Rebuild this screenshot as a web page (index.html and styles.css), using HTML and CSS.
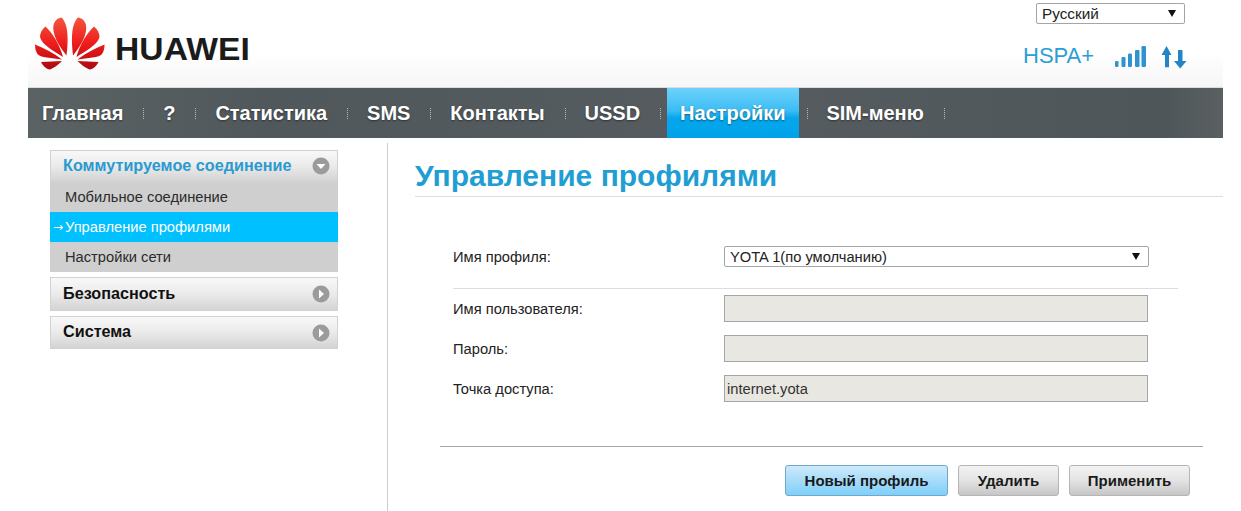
FILE: index.html
```html
<!DOCTYPE html>
<html lang="ru">
<head>
  <meta charset="UTF-8">
  <title>Управление профилями</title>
  <link rel="stylesheet" href="styles.css">
</head>
<body>
  <div class="page">

    <div class="header">
      <div class="logo">
        <svg class="logo-mark" width="80" height="80" viewBox="0 0 80 80">
          <defs>
            <linearGradient id="petal" gradientUnits="userSpaceOnUse" x1="0" y1="7" x2="0" y2="60">
              <stop offset="0" stop-color="#f4583e"/>
              <stop offset="0.5" stop-color="#ee1c1c"/>
              <stop offset="1" stop-color="#a80a10"/>
            </linearGradient>
            <g id="petals" fill="url(#petal)">
              <path d="M36.500 45.500C28 35 22 24 23.500 15C25 10 28 8 31.500 7.500C37 13 39 24 36.500 45.500Z"/>
              <path d="M33 47C24 41 12 35 10 27C10 23 12 19 15.500 16.500C22 22 30 35 33 47Z"/>
              <path d="M32 49.500C22 48 10 47.500 7.500 44C5.500 41 5 38 5 34.500C14 38 24 43 32 49.500Z"/>
              <path d="M11 52L32 51C28 55 24 58 20 59.500C16 59 13 56 11 52Z"/>
            </g>
          </defs>
          <use href="#petals"/>
          <use href="#petals" transform="translate(79.500 0) scale(-1 1)"/>
        </svg>
        <span class="logo-text">HUAWEI</span>
      </div>
      <div class="header-right">
        <div class="select lang">
          <select><option>Русский</option></select>
        </div>
        <div class="status">
          <span class="network">HSPA+</span>
          <svg class="signal" width="32" height="22" viewBox="0 0 32 22" fill="#2f93cf">
            <rect x="0" y="15" width="3.500" height="6" rx="1.200"/>
            <rect x="6.500" y="11" width="4" height="10" rx="1.200"/>
            <rect x="13" y="7.500" width="4" height="13.500" rx="1.200"/>
            <rect x="20" y="4" width="4.500" height="17" rx="1.200"/>
            <rect x="26.500" y="0" width="4.500" height="21" rx="1.200"/>
          </svg>
          <svg class="updown" width="26" height="23" viewBox="0 0 26 23" fill="#2385c4">
            <path d="M5.500 0L10.500 9H8V21.300H4V9H0.500Z"/>
            <path d="M17 4H21.500V15H25.500L19.200 22.500L13 15H17Z"/>
          </svg>
        </div>
      </div>
    </div>

    <ul class="nav">
      <li><a>Главная</a></li>
      <li class="sep"></li>
      <li><a>?</a></li>
      <li class="sep"></li>
      <li><a>Статистика</a></li>
      <li class="sep"></li>
      <li><a>SMS</a></li>
      <li class="sep"></li>
      <li><a>Контакты</a></li>
      <li class="sep"></li>
      <li><a>USSD</a></li>
      <li class="sep"></li>
      <li class="active"><a>Настройки</a></li>
      <li class="sep"></li>
      <li><a>SIM-меню</a></li>
      <li class="sep"></li>
    </ul>

    <div class="content">
      <div class="sidebar">
        <div class="side-head open">
          <span>Коммутируемое соединение</span>
          <svg width="18" height="18" viewBox="0 0 18 18"><circle cx="9" cy="9" r="8.500" fill="#9b9b9b"/><path d="M4.500 7H13.500L9 12Z" fill="#fff"/></svg>
        </div>
        <ul class="side-sub">
          <li>Мобильное соединение</li>
          <li class="current">Управление профилями</li>
          <li>Настройки сети</li>
        </ul>
        <div class="side-head">
          <span>Безопасность</span>
          <svg width="18" height="18" viewBox="0 0 18 18"><circle cx="9" cy="9" r="8.500" fill="#9b9b9b"/><path d="M7 4.500V13.500L12 9Z" fill="#fff"/></svg>
        </div>
        <div class="side-head">
          <span>Система</span>
          <svg width="18" height="18" viewBox="0 0 18 18"><circle cx="9" cy="9" r="8.500" fill="#9b9b9b"/><path d="M7 4.500V13.500L12 9Z" fill="#fff"/></svg>
        </div>
      </div>

      <div class="main">
        <h1>Управление профилями</h1>

        <div class="form">
          <div class="row row-select">
            <label>Имя профиля:</label>
            <div class="select profile">
              <select><option>YOTA 1(по умолчанию)</option></select>
            </div>
          </div>
          <div class="divider"></div>
          <div class="row">
            <label>Имя пользователя:</label>
            <input type="text" disabled>
          </div>
          <div class="row">
            <label>Пароль:</label>
            <input type="text" disabled>
          </div>
          <div class="row">
            <label>Точка доступа:</label>
            <input type="text" value="internet.yota" disabled>
          </div>
        </div>

        <div class="actions">
          <button class="primary">Новый профиль</button>
          <button class="del">Удалить</button>
          <button class="apply">Применить</button>
        </div>
      </div>
    </div>

  </div>
</body>
</html>
```

FILE: styles.css
```css
* {
  box-sizing: border-box;
}

html, body {
  margin: 0;
  padding: 0;
  background: #fff;
}

body {
  font-family: "Liberation Sans", Arial, sans-serif;
  color: #222;
  overflow: hidden;
}

.page {
  width: 1195px;
  height: 511px;
  margin-left: 28px;
}

/* header */
.header {
  height: 88px;
  display: flex;
  justify-content: space-between;
  background: linear-gradient(to bottom, #fff 0%, #fff 60%, #f6f6f6 100%);
  border-bottom: 1px solid #ddd;
}

.logo {
  display: flex;
  align-items: flex-start;
  padding-left: 2px;
  padding-top: 10px;
}

.logo-text {
  margin-left: 5px;
  margin-top: 21px;
  font-size: 32px;
  line-height: 36px;
  font-weight: bold;
  color: #1b1b1b;
  letter-spacing: 0.1px;
  transform: scaleX(1.05);
  transform-origin: left center;
}

.header-right {
  width: 200px;
  padding-top: 3px;
  padding-left: 5px;
}

.select {
  position: relative;
}

.select select {
  width: 100%;
  height: 100%;
  appearance: none;
  background: #fff;
  border: 1px solid #a5a5a5;
  border-radius: 2px;
  font-family: "Liberation Sans", Arial, sans-serif;
  font-size: 14.700px;
  color: #222;
  padding: 0 5px;
  outline: none;
}

.select::after {
  content: "";
  position: absolute;
  top: 7px;
  right: 9px;
  border-left: 4px solid transparent;
  border-right: 4px solid transparent;
  border-top: 7px solid #111;
}

.lang {
  width: 149px;
  height: 21px;
  margin-left: 8px;
}

.lang select {
  font-size: 15.300px;
}

.status {
  display: flex;
  align-items: flex-start;
  margin-top: 17px;
  margin-left: -5px;
}

.network {
  font-size: 22px;
  line-height: 30px;
  color: #2c9ed4;
  width: 92px;
}

.signal {
  margin-top: 5px;
}

.updown {
  margin-top: 5px;
  margin-left: 14px;
}

/* nav */
.nav {
  list-style: none;
  margin: 0;
  padding: 0;
  height: 50px;
  display: flex;
  align-items: center;
  background: linear-gradient(to right, #5b6264 0%, #50585b 20%, #565c5f 60%, #4e5659 95%, #5a6062 100%);
}

.nav li a {
  display: block;
  padding: 0 20px 0 14px;
  font-size: 20px;
  line-height: 50px;
  font-weight: bold;
  color: #fff;
  text-shadow: 0 1px 2px rgba(0, 0, 0, 0.45);
}

.nav .sep + li a {
  padding-left: 20px;
}

.nav .sep {
  width: 1px;
  height: 11px;
  margin-right: -1.100px;
  border-left: 1px dotted #b5babb;
}

.nav .active {
  align-self: stretch;
  margin-left: 7px;
  margin-right: 8px;
  background: linear-gradient(to bottom, #6cd2fb 0%, #3cbdf4 45%, #05a6ec 60%, #00a3ea 100%);
}

.nav .sep + .active a {
  padding: 0 13px;
}

/* layout under the nav */
.content {
  display: flex;
  padding-top: 5px;
}

.sidebar {
  width: 288px;
  margin-left: 22px;
  margin-right: 49px;
  padding-top: 7px;
}

.side-head {
  height: 34px;
  margin-bottom: 5px;
  padding: 0 7px 0 12px;
  display: flex;
  justify-content: space-between;
  align-items: center;
  border: 1px solid #d2d2d2;
  background: linear-gradient(to bottom, #f8f8f8 0%, #ececec 45%, #d4d4d4 100%);
  font-size: 16.200px;
  font-weight: bold;
  color: #111;
}

.side-head span {
  margin-top: -2px;
}

.side-head:last-child {
  height: 33px;
}

.side-head.open {
  height: 32px;
  margin-bottom: 0;
  color: #2a9ad0;
}

.side-sub {
  list-style: none;
  margin: 0 0 5px;
  padding: 0;
  background: #cfcfcf;
}

.side-sub li {
  height: 30px;
  line-height: 30px;
  padding-left: 15px;
  font-size: 14.700px;
  color: #2b2b2b;
}

.side-sub .current {
  position: relative;
  background: #00c0ff;
  color: #fff;
}

.side-sub .current::before {
  content: "→";
  position: absolute;
  left: 3px;
  font-family: "DejaVu Sans", sans-serif;
  font-size: 12px;
}

.main {
  width: 836px;
  height: 368px;
  border-left: 1px solid #ccc;
  padding-left: 27px;
}

h1 {
  margin: 0;
  height: 54px;
  padding-top: 14px;
  border-bottom: 1px solid #ddd;
  font-size: 30px;
  line-height: 38px;
  font-weight: bold;
  color: #1f9ed3;
}

.form {
  margin-left: 38px;
  padding-top: 49px;
  width: 725px;
}

.row {
  display: flex;
  align-items: center;
  height: 27px;
  margin-bottom: 13px;
}

.row label {
  width: 271px;
  font-size: 14.700px;
  color: #222;
}

.row input {
  width: 424px;
  height: 27px;
  border: 1px solid #a5a5a5;
  background: #e9e7e1;
  font-family: "Liberation Sans", Arial, sans-serif;
  font-size: 14.700px;
  color: #333;
  padding: 0 2px;
}

.row-select {
  height: 21px;
  margin-bottom: 0;
}

.profile {
  width: 425px;
  height: 21px;
}

.divider {
  height: 1px;
  margin: 21px 0 6px;
  background: #ddd;
}

.actions {
  display: flex;
  justify-content: flex-end;
  gap: 10px;
  margin-left: 25px;
  margin-top: 44px;
  width: 763px;
  padding-top: 18px;
  padding-right: 13px;
  border-top: 1px solid #a8a8a8;
}

button {
  height: 31px;
  border: 1px solid #b5b5b5;
  border-radius: 3px;
  background: linear-gradient(to bottom, #f3f3f3 0%, #e3e3e3 50%, #c6c6c6 100%);
  font-family: "Liberation Sans", Arial, sans-serif;
  font-size: 15px;
  font-weight: bold;
  color: #1a1a1a;
  padding: 0;
}

button.primary {
  width: 163px;
  border-color: #6fa8c8;
  background: linear-gradient(to bottom, #cdeafb 0%, #a6dcf9 50%, #7fd0fa 100%);
}

button.del {
  width: 101px;
}

button.apply {
  width: 121px;
}
```
